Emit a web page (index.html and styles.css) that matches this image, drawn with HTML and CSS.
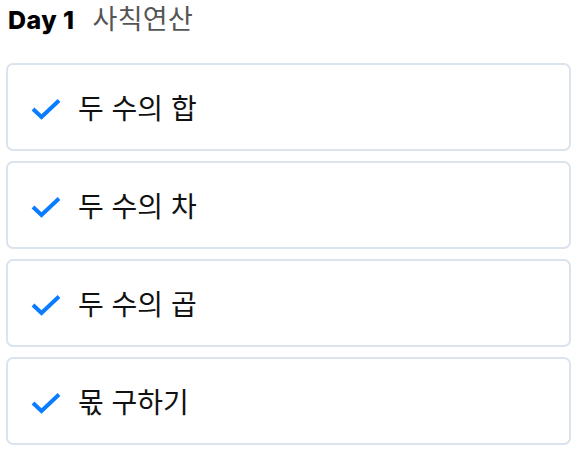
FILE: index.html
```html
<!DOCTYPE html>
<html lang="ko">
<head>
<meta charset="utf-8">
<link rel="stylesheet" href="styles.css">
</head>
<body>
<h1 class="title"><span class="day">Day 1</span><span class="topic">사칙연산</span></h1>
<ul class="list">
  <li class="item"><svg class="check" viewBox="0 0 30 22" width="30" height="22"><path d="M2 11 L10.5 19 L28 2.5" fill="none" stroke="#0a7cff" stroke-width="4"/></svg><span class="label">두 수의 합</span></li>
  <li class="item"><svg class="check" viewBox="0 0 30 22" width="30" height="22"><path d="M2 11 L10.5 19 L28 2.5" fill="none" stroke="#0a7cff" stroke-width="4"/></svg><span class="label">두 수의 차</span></li>
  <li class="item"><svg class="check" viewBox="0 0 30 22" width="30" height="22"><path d="M2 11 L10.5 19 L28 2.5" fill="none" stroke="#0a7cff" stroke-width="4"/></svg><span class="label">두 수의 곱</span></li>
  <li class="item"><svg class="check" viewBox="0 0 30 22" width="30" height="22"><path d="M2 11 L10.5 19 L28 2.5" fill="none" stroke="#0a7cff" stroke-width="4"/></svg><span class="label">몫 구하기</span></li>
</ul>
</body>
</html>
```
FILE: styles.css
```css
html, body {
  margin: 0;
  background: #fff;
}
body {
  padding: 0 7px 0 6px;
  font-family: Inter, "Noto Sans CJK KR", sans-serif;
  color: #111;
}
.title {
  margin: 0;
  height: 63px;
  padding: 0 0 0 2px;
  box-sizing: border-box;
  font-size: 25px;
  line-height: 36px;
  display: flex;
  gap: 18px;
  align-items: baseline;
}
.day {
  font-weight: 800;
  letter-spacing: 0.45px;
  color: #000;
}
.topic {
  font-weight: 400;
  font-size: 27px;
  letter-spacing: 0.3px;
  color: #555;
  font-family: "Noto Sans CJK KR", sans-serif;
}
.list {
  list-style: none;
  margin: 0;
  padding: 0;
  display: flex;
  flex-direction: column;
  gap: 10px;
}
.item {
  height: 88px;
  box-sizing: border-box;
  border: 2px solid #dbe3ec;
  border-radius: 7px;
  display: flex;
  align-items: center;
  padding-left: 23px;
  gap: 17px;
}
.check {
  display: block;
  flex: none;
  margin-top: 4px;
}
.label {
  font-family: "Noto Sans CJK KR", sans-serif;
  font-size: 28px;
  color: #111;
}
```
